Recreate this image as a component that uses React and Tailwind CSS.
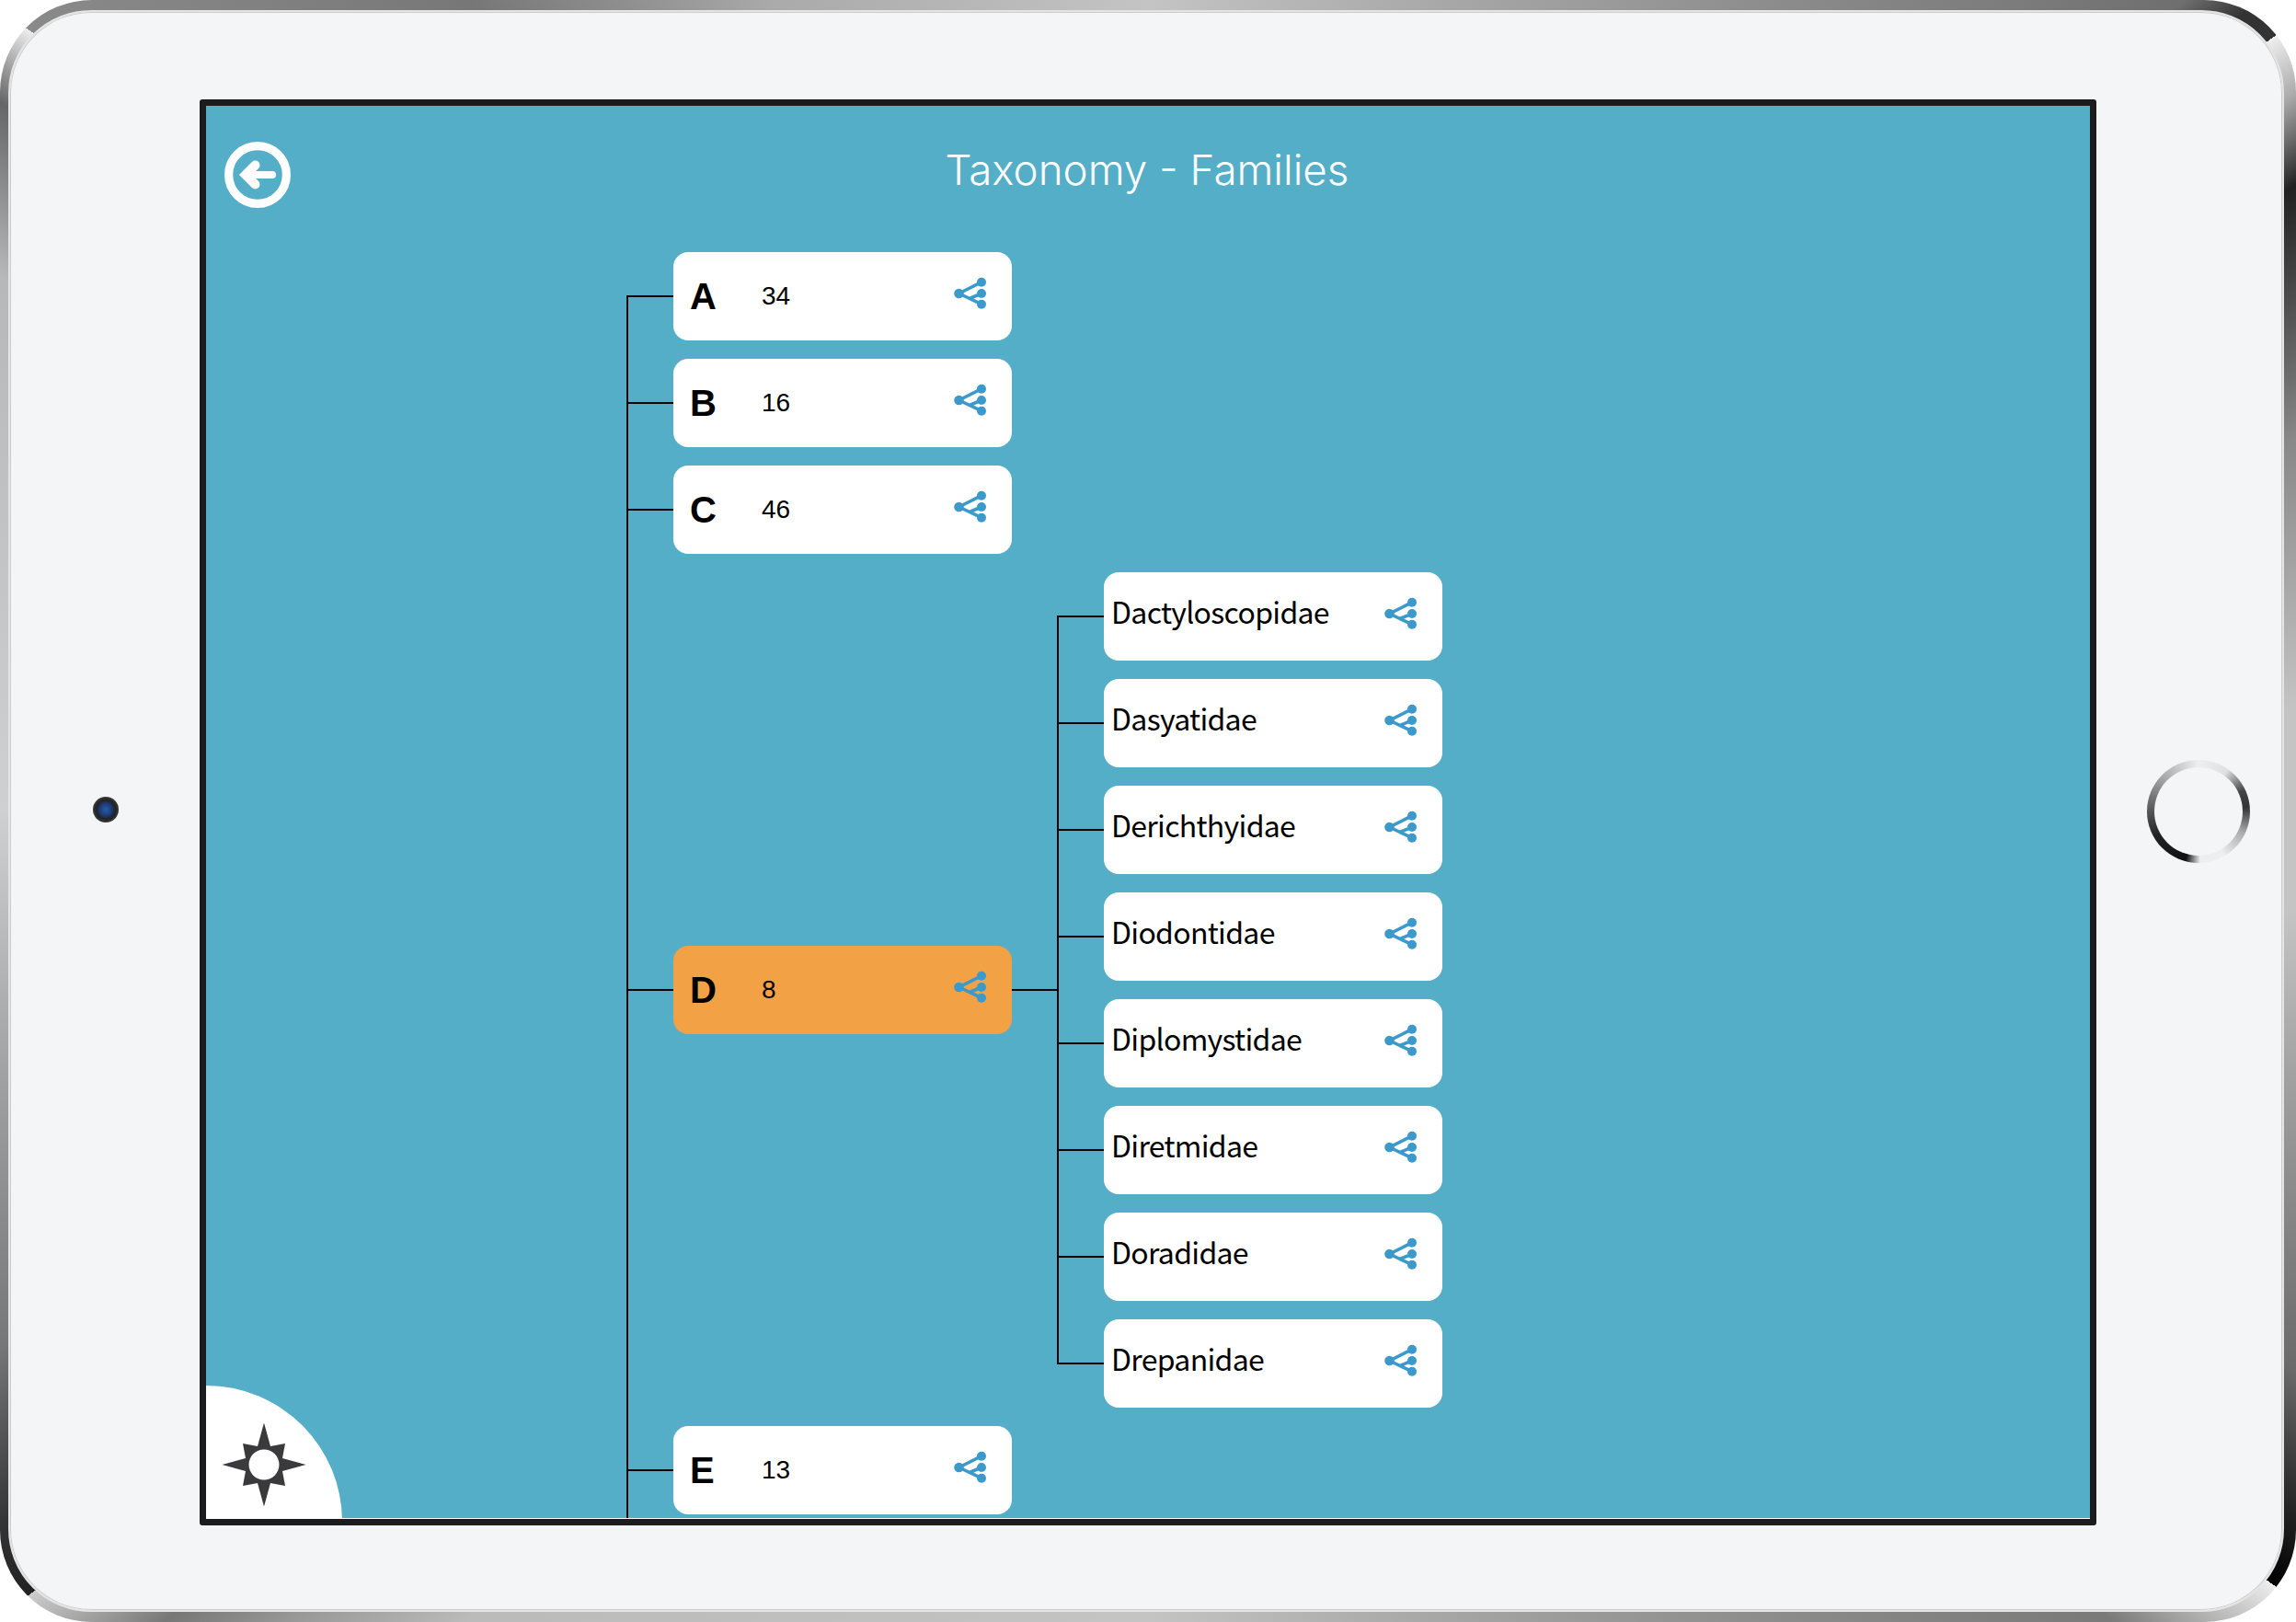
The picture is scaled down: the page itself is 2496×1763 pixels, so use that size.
const top = [["A", "34"], ["B", "16"], ["C", "46"]];
const kids = ["Dactyloscopidae", "Dasyatidae", "Derichthyidae", "Diodontidae", "Diplomystidae", "Diretmidae", "Doradidae", "Drepanidae"];

function Share() {
  return (
    <svg width="36" height="36" viewBox="0 0 36 36" className="mb-[6px] shrink-0" fill="#3b9acb" stroke="#3b9acb">
      <path d="M6.5 18 L31 5.7 M6.5 18 L31 29.7 M18 23.5 L31 18" strokeWidth="3.6" fill="none" />
      <circle cx="6.5" cy="18" r="5.3" stroke="none" />
      <circle cx="31" cy="5.7" r="5" stroke="none" />
      <circle cx="31" cy="18" r="5" stroke="none" />
      <circle cx="31" cy="29.7" r="5" stroke="none" />
    </svg>
  );
}

function LetterCard({ letter, count, active }) {
  return (
    <div className={`w-[368px] h-[96px] shrink-0 rounded-[16px] flex items-center pl-[18px] pr-[28px] text-black font-['Liberation_Sans',sans-serif] ${active ? "bg-[#f2a244]" : "bg-white"}`}>
      <span className="w-[78px] text-[40px] leading-none font-bold">{letter}</span>
      <span className="flex-1 text-[28px] leading-none">{count}</span>
      <Share />
    </div>
  );
}

function Stub({ w }) {
  return <div className={`h-[2px] bg-black shrink-0 ${w}`} />;
}

function KidRow({ name }) {
  return (
    <div className="flex items-center">
      <Stub w="w-[51px]" />
      <div className="w-[368px] h-[96px] rounded-[16px] bg-white flex items-center justify-between pl-[8px] pr-[28px]">
        <span className="mb-[12px] text-[32px] tracking-[-0.7px] leading-none text-black font-['Noto_Sans_CJK_KR','Noto_Sans',sans-serif]">{name}</span>
        <Share />
      </div>
    </div>
  );
}

export default function App() {
  return (
    <div className="w-[2496px] h-[1763px] bg-white overflow-hidden">
      <div className="w-full h-full rounded-[100px] pt-[11px] pr-[13px] pb-[11px] pl-[9px] bg-[conic-gradient(from_0deg_at_50%_50%,#c4c4c4_0deg,#9a9a9a_30deg,#7c7c7c_47deg,#6f6f6f_52deg,#333333_54deg,#333333_55.5deg,#eeeeee_55.5deg,#aaaaaa_58deg,#222222_61.4deg,#888888_72deg,#c4c4c4_85deg,#c4c4c4_95deg,#6a6a6a_116deg,#222222_121.6deg,#000000_124.5deg,#eeeeee_124.5deg,#cccccc_126deg,#7a7a7a_130deg,#c4c4c4_180deg,#bbbbbb_220deg,#999999_226.5deg,#777777_230.5deg,#cccccc_235deg,#222222_235deg,#333333_238deg,#777777_245deg,#d0d0d0_270deg,#b8b8b8_295deg,#666666_301.7deg,#999999_303deg,#eeeeee_304.9deg,#8a8a8a_304.9deg,#777777_320deg,#aaaaaa_335deg,#c4c4c4_360deg)]">
        <div className="w-full h-full rounded-[90px] bg-[#f4f5f7] border-2 border-[#e4e4e4] shadow-[inset_0_0_0_1px_#cccccc] flex items-center">
          <div className="w-[206px] shrink-0 flex justify-center">
            <div className="w-[28px] h-[28px] ml-[2px] mb-[4px] rounded-full bg-[radial-gradient(circle,#2a5aa8_0%,#1d3f80_30%,#222222_52%,#4a4a4a_85%,#2a2a2a_100%)]" />
          </div>

          <div className="w-[2062px] h-[1550px] shrink-0 self-start mt-[95px] border-[7px] border-[#1c1c1c] rounded-[3px] bg-[#55aec7] overflow-hidden relative">
            <header className="h-[159px] grid grid-cols-[92px_1fr_92px]">
              <svg width="72" height="72" viewBox="0 0 72 72" className="ml-[20px] mt-[39px]">
                <circle cx="36" cy="36" r="31.4" fill="none" stroke="#ffffff" strokeWidth="9.2" />
                <path d="M33.5 25.5 L23 36 L33.5 46.5" fill="none" stroke="#ffffff" strokeWidth="10" strokeLinecap="round" strokeLinejoin="miter" />
                <path d="M26 36 H52" fill="none" stroke="#ffffff" strokeWidth="8" strokeLinecap="round" />
              </svg>
              <h1 className="pt-[42px] pr-[2px] text-center text-white text-[45.7px] leading-[56px] font-[350] font-['Inter',sans-serif]">Taxonomy - Families</h1>
              <div />
            </header>

            <div className="ml-[457px] h-[1377px] relative flex flex-col gap-[20px]">
              <div className="absolute left-0 top-[47px] bottom-0 w-[2px] bg-black" />
              {top.map(([l, c]) => (
                <div key={l} className="flex items-center">
                  <Stub w="w-[51px]" />
                  <LetterCard letter={l} count={c} />
                </div>
              ))}
              <div className="flex items-center">
                <Stub w="w-[51px]" />
                <LetterCard letter="D" count="8" active />
                <Stub w="w-[49px]" />
                <div className="relative flex flex-col gap-[20px]">
                  <div className="absolute left-0 top-[47px] bottom-[47px] w-[2px] bg-black" />
                  {kids.map((k) => (
                    <KidRow key={k} name={k} />
                  ))}
                </div>
              </div>
              <div className="flex items-center">
                <Stub w="w-[51px]" />
                <LetterCard letter="E" count="13" />
              </div>
            </div>

            <div className="absolute left-0 right-0 bottom-0 h-[1px] bg-white" />
            <div className="absolute left-0 bottom-[-3px] w-[148px] h-[148px] rounded-tr-full bg-white">
              <svg width="92" height="92" viewBox="-46 -46 92 92" className="ml-[17px] mt-[40px]">
                <path
                  fillRule="evenodd"
                  fill="#3a3a3c"
                  d="M0 -45.5 L7 -20 L23 -23 L20 -7 L45.5 0 L20 7 L23 23 L7 20 L0 45.5 L-7 20 L-23 23 L-20 7 L-45.5 0 L-20 -7 L-23 -23 L-7 -20 Z M16.5 0 A16.5 16.5 0 1 0 -16.5 0 A16.5 16.5 0 1 0 16.5 0 Z"
                />
              </svg>
            </div>
          </div>

          <div className="flex-1 flex justify-center pl-[20px]">
            <div className="w-[112px] h-[112px] rounded-full p-[8px] bg-[conic-gradient(from_0deg,#efefef_0deg,#e0e0e0_35deg,#444444_65deg,#333333_85deg,#aaaaaa_115deg,#eeeeee_150deg,#eeeeee_178deg,#111111_195deg,#222222_240deg,#555555_270deg,#aaaaaa_315deg,#efefef_360deg)]">
              <div className="w-full h-full rounded-full bg-[#f4f5f7]" />
            </div>
          </div>
        </div>
      </div>
    </div>
  );
}
